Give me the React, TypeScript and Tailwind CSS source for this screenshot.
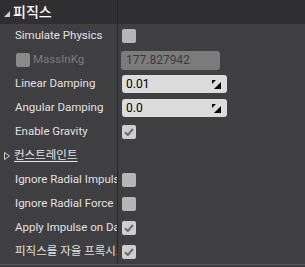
import React from "react";

const font = { fontFamily: 'Roboto, "Noto Sans CJK KR", sans-serif' };

function Box({ checked }: { checked?: boolean }) {
  return (
    <div
      className={`w-[14px] h-[14px] rounded-[2px] flex items-center justify-center ${
        checked ? "bg-[#cfcfcf]" : "bg-[#b5b5b5]"
      }`}
    >
      {checked && (
        <svg width="10" height="8" viewBox="0 0 10 8">
          <path d="M1 4.2 L3.8 7 L9 1" stroke="#6b6b6b" strokeWidth="2" fill="none" />
        </svg>
      )}
    </div>
  );
}

function Spin({ value }: { value: string }) {
  return (
    <div className="w-[105px] h-[18px] rounded-[3px] bg-[#dcdcdc] flex items-center justify-between pl-[4px] pr-[6px]">
      <span className="text-[12px] text-black leading-none">{value}</span>
      <svg width="9" height="9" viewBox="0 0 9 9">
        <path d="M0 0 H4 L0 4 Z" fill="#000" />
        <path d="M9 9 V2 L2 9 Z" fill="#000" />
      </svg>
    </div>
  );
}

function Row({ label, children, dim }: { label: React.ReactNode; children?: React.ReactNode; dim?: boolean }) {
  return (
    <div className="flex h-[24px]">
      <div
        className={`w-[118px] shrink-0 border-r border-[#242326] flex items-center pl-[15px] overflow-hidden whitespace-nowrap text-[11.5px] ${
          dim ? "text-[#7c7c7c]" : "text-[#e2e2e2]"
        }`}
      >
        {label}
      </div>
      <div className="flex-1 flex items-center pl-[4px]">{children}</div>
    </div>
  );
}

export default function App() {
  return (
    <div className="w-[305px] h-[267px] bg-[#3f3e41] overflow-hidden" style={font}>
      <div className="flex h-[24px] bg-[#2f2e31]">
        <div className="w-[118px] shrink-0 border-r border-[#232225] flex items-center pl-[4px] gap-[3px]">
          <svg width="6" height="6" viewBox="0 0 6 6" className="mt-[3px]">
            <path d="M6 0 V6 H0 Z" fill="#cfcfcf" />
          </svg>
          <span className="text-[14px] text-white font-medium">피직스</span>
        </div>
        <div className="flex-1" />
      </div>
      <Row label="Simulate Physics">
        <Box />
      </Row>
      <div className="flex h-[24px]">
        <div className="w-[118px] shrink-0 border-r border-[#242326] flex items-center pl-[16px] gap-[3px] overflow-hidden whitespace-nowrap text-[11.5px] text-[#7c7c7c]">
          <div className="w-[14px] h-[14px] rounded-[2px] bg-[#8a8a8a]" />
          <span>MassInKg</span>
        </div>
        <div className="flex-1 flex items-center pl-[3px]">
          <div className="w-[99px] h-[19px] rounded-[3px] bg-[#7b7b7b] flex items-center pl-[5px] text-[12px] text-[#3a3a3a]">
            177.827942
          </div>
        </div>
      </div>
      <Row label="Linear Damping">
        <Spin value="0.01" />
      </Row>
      <Row label="Angular Damping">
        <Spin value="0.0" />
      </Row>
      <Row label="Enable Gravity">
        <Box checked />
      </Row>
      <div className="flex h-[24px]">
        <div className="w-[118px] shrink-0 border-r border-[#242326] flex items-center pl-[4px] gap-[4px] whitespace-nowrap overflow-hidden text-[11.5px] text-[#e6e6e6]">
          <svg width="6" height="8" viewBox="0 0 6 8">
            <path d="M0.5 0.5 L5.5 4 L0.5 7.5 Z" fill="none" stroke="#cfcfcf" strokeWidth="1" />
          </svg>
          <span className="underline underline-offset-2">컨스트레인트</span>
        </div>
        <div className="flex-1" />
      </div>
      <Row label="Ignore Radial Impulse">
        <Box />
      </Row>
      <Row label="Ignore Radial Force">
        <Box />
      </Row>
      <Row label="Apply Impulse on Damage">
        <Box checked />
      </Row>
      <Row label="피직스를 자율 프록시로 복제">
        <Box checked />
      </Row>
      <div className="h-[1px] bg-[#545356]" />
    </div>
  );
}
